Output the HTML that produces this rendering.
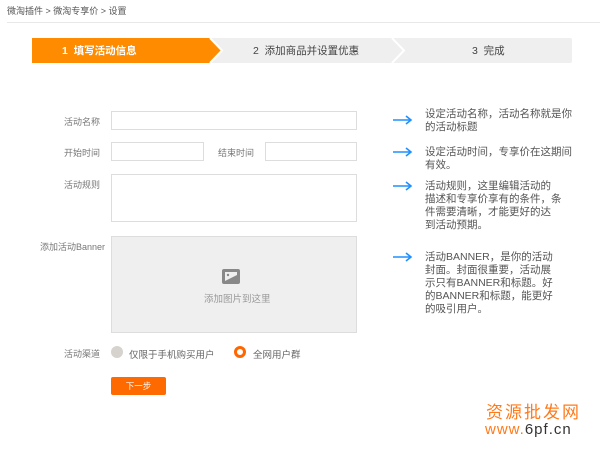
<!DOCTYPE html>
<html><head><meta charset="utf-8"><style>
*{margin:0;padding:0;box-sizing:border-box}
body{width:600px;height:454px;background:#fff;position:relative;overflow:hidden;font-family:"Liberation Sans","Noto Sans CJK SC",sans-serif;color:#666;font-size:9px}
.a{position:absolute;white-space:nowrap}
.in{position:absolute;border:1px solid #ddd;background:#fff}
.lbl{position:absolute;font-size:9px;color:#777;text-align:right;width:60px}
.tip{position:absolute;left:425px;font-size:10.5px;line-height:13px;color:#555;width:180px}
.arr{position:absolute;left:393px;width:20px;height:10px}
</style></head><body>
<div class="a" style="left:7px;top:4px;color:#555;font-size:9px">微淘插件 &gt; 微淘专享价 &gt; 设置</div>
<div class="a" style="left:7px;top:22px;width:593px;height:1px;background:#e8e8e8"></div>
<svg class="a" style="left:32px;top:38px" width="540" height="25">
<rect x="0" y="0" width="540" height="25" rx="2" fill="#efefef"/>
<polygon points="0,0 178,0 190,12.5 178,25 0,25" fill="#ff8c00"/>
<polyline points="178,0 190,12.5 178,25" fill="none" stroke="#fff" stroke-width="2"/>
<polyline points="360,0 372,12.5 360,25" fill="none" stroke="#fff" stroke-width="2"/>
</svg>
<div class="a" style="left:62px;top:43px;font-size:10.5px;color:#fff;font-weight:bold">1&nbsp; 填写活动信息</div>
<div class="a" style="left:253px;top:43px;font-size:10.5px;color:#444">2&nbsp; 添加商品并设置优惠</div>
<div class="a" style="left:472px;top:43px;font-size:10.5px;color:#444">3&nbsp; 完成</div>

<div class="lbl" style="left:40px;top:115px">活动名称</div>
<div class="in" style="left:111px;top:111px;width:246px;height:19px"></div>
<div class="lbl" style="left:40px;top:146px">开始时间</div>
<div class="in" style="left:111px;top:142px;width:93px;height:19px"></div>
<div class="a" style="left:218px;top:146px;color:#777">结束时间</div>
<div class="in" style="left:265px;top:142px;width:92px;height:19px"></div>
<div class="lbl" style="left:40px;top:178px">活动规则</div>
<div class="in" style="left:111px;top:174px;width:246px;height:48px"></div>
<div class="a" style="left:40px;top:240px;color:#777">添加活动Banner</div>
<div class="a" style="left:111px;top:236px;width:246px;height:97px;background:#efefef;border:1px solid #ddd"></div>
<svg class="a" style="left:222px;top:269px" width="18" height="15"><rect x="0" y="0" width="18" height="15" rx="2" fill="#888"/><rect x="3" y="3" width="12" height="9" fill="#eee"/><polygon points="3,12 15,6 15,12" fill="#888"/><circle cx="6" cy="6" r="1.2" fill="#888"/></svg>
<div class="a" style="left:204px;top:291px;color:#999;font-size:9.5px">添加图片到这里</div>
<div class="lbl" style="left:40px;top:347px">活动渠道</div>
<div class="a" style="left:111px;top:346px;width:12px;height:12px;border-radius:50%;background:#d6d3cf"></div>
<div class="a" style="left:129px;top:347px;color:#666;font-size:9.5px">仅限于手机购买用户</div>
<div class="a" style="left:234px;top:346px;width:12px;height:12px;border-radius:50%;background:#fff;border:3.5px solid #ff6600"></div>
<div class="a" style="left:253px;top:347px;color:#666;font-size:9.5px">全网用户群</div>
<div class="a" style="left:111px;top:377px;width:55px;height:18px;background:#ff6a00;border-radius:2px;color:#fff;text-align:center;line-height:18px;font-size:8.5px">下一步</div>

<svg class="arr" style="top:115px" viewBox="0 0 20 10"><path d="M0 5H18M13 1L18 5L13 9" stroke="#1e90ff" stroke-width="1.6" fill="none"/></svg>
<svg class="arr" style="top:147px" viewBox="0 0 20 10"><path d="M0 5H18M13 1L18 5L13 9" stroke="#1e90ff" stroke-width="1.6" fill="none"/></svg>
<svg class="arr" style="top:181px" viewBox="0 0 20 10"><path d="M0 5H18M13 1L18 5L13 9" stroke="#1e90ff" stroke-width="1.6" fill="none"/></svg>
<svg class="arr" style="top:252px" viewBox="0 0 20 10"><path d="M0 5H18M13 1L18 5L13 9" stroke="#1e90ff" stroke-width="1.6" fill="none"/></svg>
<div class="tip" style="top:108px">设定活动名称，活动名称就是你<br>的活动标题</div>
<div class="tip" style="top:146px">设定活动时间，专享价在这期间<br>有效。</div>
<div class="tip" style="top:180px">活动规则，这里编辑活动的<br>描述和专享价享有的条件，条<br>件需要清晰，才能更好的达<br>到活动预期。</div>
<div class="tip" style="top:251px">活动BANNER，是你的活动<br>封面。封面很重要，活动展<br>示只有BANNER和标题。好<br>的BANNER和标题，能更好<br>的吸引用户。</div>

<div class="a" style="left:486px;top:398px;font-size:17px;color:#ff7a1a;letter-spacing:2px">资源批发网</div>
<div class="a" style="left:485px;top:421px;font-size:15px;color:#ff7a1a;letter-spacing:1px">www<span style="color:#ff7a1a">.</span><span style="color:#333">6pf.cn</span></div>
</body></html>
